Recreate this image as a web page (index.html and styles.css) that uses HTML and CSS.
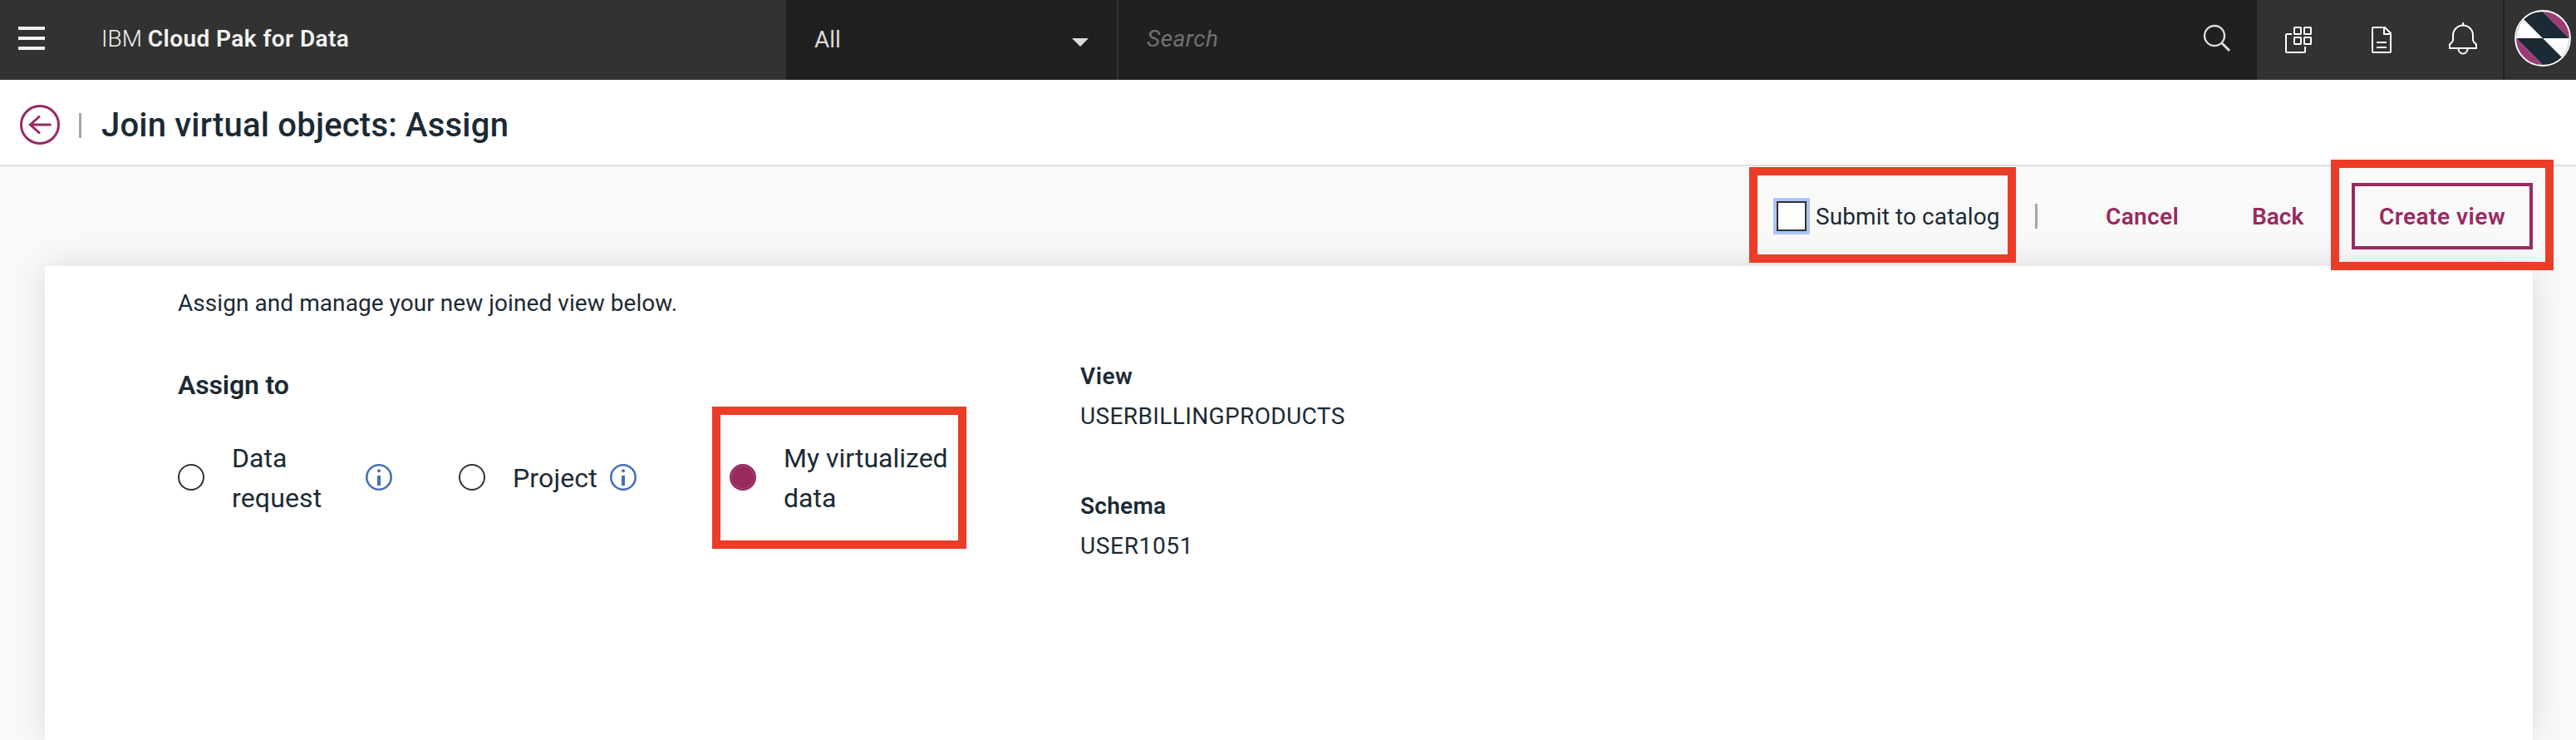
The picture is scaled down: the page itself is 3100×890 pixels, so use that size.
FILE: index.html
```html
<!DOCTYPE html>
<html lang="en">
<head>
<meta charset="utf-8">
<title>Join virtual objects: Assign</title>
<link rel="stylesheet" href="styles.css">
</head>
<body>
<header class="topbar">
  <div class="brand">
    <svg class="menu" width="32" height="28" viewBox="0 0 32 28" fill="#f3f3f3"><path d="M0 0h32v4H0zM0 12h32v4H0zM0 24h32v4H0z"/></svg>
    <span class="brand-name"><span class="t t-ibm">IBM</span> <b class="t t-cpd">Cloud Pak for Data</b></span>
  </div>
  <div class="scope"><span class="t t-all">All</span>
    <svg width="20" height="10" viewBox="0 0 20 10" fill="#dcdcdc"><path d="M0 0h20L10 10z"/></svg>
  </div>
  <div class="search"><i class="t t-search">Search</i>
    <svg width="34" height="34" viewBox="0 0 34 34" fill="none" stroke="#dcdcdc"><circle cx="14" cy="14" r="12" stroke-width="2.4"/><path d="M22.500 22.500L32 32" stroke-width="3"/></svg>
  </div>
  <div class="tools">
    <svg class="tool-apps" width="32" height="32" viewBox="0 0 32 32" fill="none" stroke="#fff" stroke-width="2"><rect x="11" y="1" width="8" height="8" rx=".5"/><rect x="23" y="1" width="8" height="8" rx=".5"/><rect x="11" y="13" width="8" height="8" rx=".5"/><rect x="23" y="13" width="8" height="8" rx=".5"/><path d="M8 9H2a1 1 0 0 0-1 1v20a1 1 0 0 0 1 1h21a1 1 0 0 0 1-1v-6"/></svg>
    <svg class="tool-doc" width="24" height="32" viewBox="0 0 24 32" fill="none" stroke="#fff" stroke-width="2"><path d="M2 1h14l7 7v22a1 1 0 0 1-1 1H2a1 1 0 0 1-1-1V2a1 1 0 0 1 1-1zM15 1v8h8M6 19h12M6 25h12"/></svg>
    <svg class="tool-bell" width="34" height="40" viewBox="0 0 34 40" fill="none" stroke="#fff" stroke-width="2"><path d="M17 0v4M5 21v-5.500a12 12 0 0 1 24 0V21l1 2.500 3 3V31H1v-4.500l3-3zM11.500 32a5.500 5.500 0 0 0 11 0"/></svg>
  </div>
  <div class="user">
    <svg width="68" height="68" viewBox="0 0 68 68"><circle cx="34" cy="34" r="32" fill="#fdfdfd"/><path d="M34 34L11 11A32 32 0 0 1 34 2L66 34zM34 34H2L34 66A32 32 0 0 0 57 57z" fill="#1b2a34"/><path d="M34 2A32 32 0 0 1 66 34zM2 34A32 32 0 0 0 34 66z" fill="#9c3b75"/><circle cx="34" cy="34" r="33" fill="none" stroke="#fff" stroke-width="1.800"/></svg>
  </div>
</header>
<section class="titlebar">
  <svg width="48" height="48" viewBox="0 0 48 48" fill="none" stroke="#982a66" stroke-width="3"><circle cx="24" cy="24" r="22.500"/><path d="M37.500 24H12.500M24 13.500L12.500 24L24 34.500"/></svg>
  <span class="rule"></span>
  <h1><span class="t t-title">Join virtual objects: Assign</span></h1>
</section>
<section class="actions">
  <label class="submit"><span class="checkbox"></span><span class="t t-submit">Submit to catalog</span></label>
  <span class="rule"></span>
  <a class="link link-cancel"><span class="t t-cancel">Cancel</span></a>
  <a class="link link-back"><span class="t t-back">Back</span></a>
  <button class="create"><span class="t t-create">Create view</span></button>
</section>
<main class="card">
  <p class="intro"><span class="t t-intro">Assign and manage your new joined view below.</span></p>
  <div class="columns">
    <section class="assign">
      <h2><span class="t t-assign">Assign to</span></h2>
      <div class="options">
        <div class="option option-request"><span class="radio"></span><span class="label"><span class="t t-data">Data</span><br><span class="t t-request">request</span></span>
          <svg class="info" width="32" height="32" viewBox="0 0 32 32"><circle cx="16" cy="16" r="14.700" fill="none" stroke="#4571b5" stroke-width="2.600"/><circle cx="16" cy="8.300" r="2" fill="#4571b5"/><path d="M14 14h4v12h-4z" fill="#4571b5"/></svg></div>
        <div class="option option-project"><span class="radio"></span><span class="label"><span class="t t-project">Project</span></span>
          <svg class="info" width="32" height="32" viewBox="0 0 32 32"><circle cx="16" cy="16" r="14.700" fill="none" stroke="#4571b5" stroke-width="2.600"/><circle cx="16" cy="8.300" r="2" fill="#4571b5"/><path d="M14 14h4v12h-4z" fill="#4571b5"/></svg></div>
        <div class="option option-mine"><span class="radio radio-on"></span><span class="label"><span class="t t-my">My virtualized</span><br><span class="t t-data2">data</span></span></div>
      </div>
    </section>
    <dl class="details">
      <dt><span class="t t-view">View</span></dt><dd><span class="t t-ubp">USERBILLINGPRODUCTS</span></dd>
      <dt><span class="t t-schema">Schema</span></dt><dd><span class="t t-u1051">USER1051</span></dd>
    </dl>
  </div>
</main>
</body>
</html>
```
FILE: styles.css
```css
*, *::after { box-sizing: border-box; }
body { margin: 0; height: 890px; overflow: hidden; background: #f9f9f9; color: #1b2a34; font: 28px/48px Roboto, "Liberation Sans", sans-serif; }
h1, h2, p, dl, dd { margin: 0; }
svg { display: block; flex: none; }
.t { white-space: nowrap; }

.topbar { display: grid; grid-template-columns: 946px 400px 1370px 298px 86px; height: 96px; background: #323232; color: #f3f3f3; }
.brand { display: flex; align-items: center; padding: 0 0 4px 22px; }
.brand-name { margin-left: 68px; padding-top: 1px; }
.t-ibm { font-weight: 300; }
.t-cpd { font-weight: 600; letter-spacing: .42px; }
.scope { display: flex; align-items: center; justify-content: space-between; padding: 0 34px 0 34px; background: #202020; border-right: 2px solid #323232; color: #dcdcdc; }
.scope svg { margin-top: 6px; }
.search { display: flex; align-items: center; justify-content: space-between; padding: 0 31px 4px 34px; background: #202020; color: #717171; }
.t-search { letter-spacing: .5px; padding-top: 1px; }
.tools { display: flex; align-items: center; padding-left: 34px; border-right: 2px solid #202020; }
.tool-doc { margin-left: 72px; }
.tool-bell { margin: -3px 0 0 69px; }
.user { padding: 12px 0 0 12px; }

.titlebar { display: flex; align-items: center; height: 104px; padding: 6px 0 0 24px; background: #fff; border-bottom: 2px solid #e0e0e0; }
.rule { width: 3px; height: 30px; background: #a6a6a6; }
.titlebar .rule { margin: 2px 0 0 23px; }
h1 { margin-left: 24px; padding-top: 1px; font-size: 40px; font-weight: 500; }
.t-title { letter-spacing: .2px; }

.actions { position: relative; z-index: 1; display: flex; align-items: center; justify-content: flex-end; height: 120px; padding-right: 52px; }
.submit { position: relative; display: flex; align-items: center; width: 272px; }
.submit::after, .create::after, .option-mine::after { content: ""; position: absolute; border: 10px solid #eb3c27; }
.submit::after { left: -33px; top: -35px; width: 321px; height: 115px; }
.t-submit { padding-top: 1px; letter-spacing: .1px; }
.checkbox { width: 36px; height: 36px; margin-right: 11px; background: #fff; border: 2px solid #323232; box-shadow: 0 0 0 4px #abc6f6; }
.actions .rule { margin-left: 39px; }
.link { padding-top: 1px; color: #982a5f; font-weight: 600; }
.link-cancel { width: 176px; margin-left: 82px; }
.t-cancel { letter-spacing: .35px; }
.link-back { width: 120px; }
.create { position: relative; width: 218px; height: 80px; padding: 1px 0 0; background: none; border: 4px solid #982a5f; color: #982a5f; font: inherit; font-weight: 600; }
.t-create { letter-spacing: .5px; }
.create::after { left: -29px; top: -32px; width: 268px; height: 133px; }

.card { height: 570px; margin: 0 52px 0 54px; padding: 21px 0 0 160px; background: #fff; box-shadow: 0 0 40px rgba(0, 0, 0, .12); }
.t-intro { letter-spacing: .06px; }
.columns { display: flex; }
.assign { width: 1086px; padding-top: 50px; }
h2 { font-size: 32px; font-weight: 600; }
.t-assign { letter-spacing: -.15px; }
.options { display: flex; align-items: center; height: 96px; margin-top: 39px; font-size: 32px; }
.option { position: relative; display: flex; align-items: center; }
.option-request { width: 338px; }
.option-project { width: 326px; }
.label { position: relative; top: 1px; margin-left: 33px; }
.t-request, .t-project { letter-spacing: .15px; }
.option-request .label { width: 161px; }
.option-project .label { width: 117px; }
.radio { width: 32px; height: 32px; border: 2px solid #323232; border-radius: 50%; flex: none; }
.radio-on { background: #982a5f; border-color: #982a5f; box-shadow: inset 0 0 0 1px rgba(255, 255, 255, .15); }
.option-mine::after { left: -21px; top: -37px; width: 306px; height: 171px; }
.details { padding-top: 40px; }
dt { font-weight: 600; }
dd + dt { margin-top: 60px; }
.t-view { letter-spacing: .5px; }
.t-ubp { letter-spacing: .38px; }
.t-schema { letter-spacing: .25px; }
.t-u1051 { letter-spacing: .65px; }
```
